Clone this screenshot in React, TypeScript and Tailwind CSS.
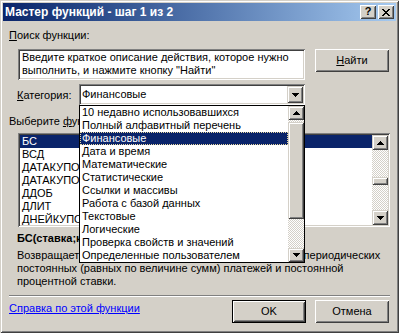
import React from "react";

// classic win bevels
const raised =
  "shadow-[inset_1px_1px_0_#fff,inset_-1px_-1px_0_#404040,inset_2px_2px_0_#d4d0c8,inset_-2px_-2px_0_#808080]";
const raisedSb =
  "shadow-[inset_1px_1px_0_#d4d0c8,inset_-1px_-1px_0_#404040,inset_2px_2px_0_#fff,inset_-2px_-2px_0_#808080]";
const sunken =
  "shadow-[inset_1px_1px_0_#808080,inset_-1px_-1px_0_#fff,inset_2px_2px_0_#404040,inset_-2px_-2px_0_#d4d0c8]";
const checker =
  "bg-[image:repeating-conic-gradient(#fff_0_25%,#d4d0c8_0_50%)] bg-size-[2px_2px]";

const categories = [
  "10 недавно использовавшихся",
  "Полный алфавитный перечень",
  "Финансовые",
  "Дата и время",
  "Математические",
  "Статистические",
  "Ссылки и массивы",
  "Работа с базой данных",
  "Текстовые",
  "Логические",
  "Проверка свойств и значений",
  "Определенные пользователем",
];

const functions = ["БС", "ВСД", "ДАТАКУПОНДО", "ДАТАКУПОНПОСЛЕ", "ДДОБ", "ДЛИТ", "ДНЕЙКУПОН"];

function Arrow({ down }: { down?: boolean }) {
  const rows = down ? [7, 5, 3, 1] : [1, 3, 5, 7];
  return (
    <svg width="7" height="4" shapeRendering="crispEdges">
      {rows.map((w, i) => (
        <rect key={i} x={(7 - w) / 2} y={i} width={w} height="1" fill="#000" />
      ))}
    </svg>
  );
}

function CloseGlyph() {
  const px = [
    [0, 1, 6, 7],
    [1, 2, 5, 6],
    [2, 3, 4, 5],
    [3, 4],
    [2, 3, 4, 5],
    [1, 2, 5, 6],
    [0, 1, 6, 7],
  ];
  return (
    <svg width="8" height="7" shapeRendering="crispEdges">
      {px.map((row, y) =>
        row.map((x) => <rect key={`${x}-${y}`} x={x} y={y} width="1" height="1" fill="#000" />)
      )}
    </svg>
  );
}

function SbButton({ down, h = "h-[14px]" }: { down?: boolean; h?: string }) {
  return (
    <div className={`${raisedSb} ${h} w-[16px] bg-[#d4d0c8] flex items-center justify-center shrink-0`}>
      <Arrow down={down} />
    </div>
  );
}

export default function App() {
  return (
    <div className="relative w-[399px] h-[333px] overflow-hidden bg-[#d4d0c8] p-[3px] shadow-[inset_1px_1px_0_#d4d0c8,inset_-1px_-1px_0_#404040,inset_2px_2px_0_#fff,inset_-2px_-2px_0_#808080] font-['Liberation_Sans',Arial,sans-serif] text-[11px] leading-[13px] text-black">
      {/* title bar */}
      <div className="h-[18px] flex items-center bg-linear-to-r from-[#0a246a] to-[#a6caf0] pl-[2px] pr-[2px]">
        <span className="flex-1 text-white font-bold text-[12px]">Мастер функций - шаг 1 из 2</span>
        <div className="flex gap-[2px]">
          <div className={`${raised} w-[16px] h-[14px] bg-[#d4d0c8] flex items-center justify-center font-bold text-[11px] leading-none pb-[1px]`}>
            ?
          </div>
          <div className={`${raised} w-[16px] h-[14px] bg-[#d4d0c8] flex items-center justify-center`}>
            <CloseGlyph />
          </div>
        </div>
      </div>

      <div className="px-[6px]">
        <div className="mt-[8px]">
          <span className="underline">П</span>оиск функции:
        </div>

        {/* search row */}
        <div className="flex items-start mt-[7px]">
          <div className={`${sunken} ml-[9px] w-[287px] h-[31px] bg-white pl-[4px] pt-[2px] whitespace-nowrap`}>
            <div>Введите краткое описание действия, которое нужно</div>
            <div>выполнить, и нажмите кнопку "Найти"</div>
          </div>
          <div className={`${raised} ml-[10px] w-[74px] h-[23px] bg-[#d4d0c8] flex items-center justify-center`}>
            <span>
              <span className="underline">Н</span>айти
            </span>
          </div>
        </div>

        {/* category row */}
        <div className="flex items-center mt-[4px]">
          <div className="ml-[8px] w-[62px] pt-[1px]">
            <span className="underline">К</span>атегория:
          </div>
          <div className={`${sunken} w-[226px] h-[21px] bg-white flex items-center pl-[3px] pr-[2px]`}>
            <span className="flex-1">Финансовые</span>
            <div className={`${raisedSb} w-[16px] h-[17px] bg-[#d4d0c8] flex items-center justify-center`}>
              <Arrow down />
            </div>
          </div>
        </div>

        <div className="mt-[10px]">
          Выберите <span className="underline">ф</span>ункцию:
        </div>

        {/* function list */}
        <div className={`${sunken} mt-[5px] ml-[9px] w-[372px] h-[94px] bg-white p-[2px] flex`}>
          <div className="flex-1">
            {functions.map((f, i) => (
              <div
                key={f}
                className={`h-[13px] pl-[2px] whitespace-nowrap ${i === 0 ? "bg-[#0a246a] text-white" : ""}`}
              >
                {f}
              </div>
            ))}
          </div>
          <div className="w-[16px] flex flex-col">
            <SbButton h="h-[15px]" />
            <div className={`flex-1 ${checker} flex flex-col`}>
              <div className={`${raisedSb} mt-[27px] h-[8px] bg-[#d4d0c8]`} />
            </div>
            <SbButton down h="h-[15px]" />
          </div>
        </div>

        <div className="mt-[5px] ml-[8px] font-bold whitespace-nowrap">БС(ставка;кпер;плт;пс;тип)</div>
        <div className="mt-[4px] ml-[8px] whitespace-nowrap">
          <div>Возвращает будущую стоимость инвестиции на основе периодических</div>
          <div>постоянных (равных по величине сумм) платежей и постоянной</div>
          <div>процентной ставки.</div>
        </div>

        <div className="mt-[7px] w-[381px] h-[2px] border-t border-t-[#808080] border-b border-b-white" />

        <div className="flex items-start mt-[3px] w-[380px]">
          <div className="flex-1 mt-[2px] text-[#0000ff] underline">Справка по этой функции</div>
          <div className={`${raised} w-[74px] h-[23px] border border-black bg-[#d4d0c8] flex items-center justify-center`}>
            OK
          </div>
          <div className={`${raised} ml-[9px] w-[74px] h-[23px] bg-[#d4d0c8] flex items-center justify-center`}>
            Отмена
          </div>
        </div>
      </div>

      {/* open category dropdown */}
      <div className="absolute left-[79px] top-[105px] w-[226px] border border-black bg-white flex">
        <div className="flex-1 pt-[0px]">
          {categories.map((c, i) => (
            <div
              key={c}
              className={`h-[13px] pl-[2px] whitespace-nowrap overflow-hidden ${
                i === 2
                  ? "bg-[#0a246a] text-white outline-1 outline-dotted outline-[#e8d8a0] -outline-offset-1"
                  : ""
              }`}
            >
              {c}
            </div>
          ))}
        </div>
        <div className="w-[16px] flex flex-col">
          <SbButton />
          <div className={`flex-1 ${checker} flex flex-col`}>
            <div className={`${raisedSb} mt-[2px] h-[97px] bg-[#d4d0c8]`} />
          </div>
          <SbButton down />
        </div>
      </div>
    </div>
  );
}
